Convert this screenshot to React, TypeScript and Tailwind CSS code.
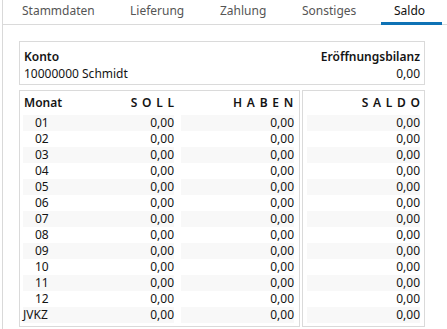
const tabs = [
  { label: 'Stammdaten', w: 'w-[108px]' },
  { label: 'Lieferung', w: 'w-[90px]' },
  { label: 'Zahlung', w: 'w-[82px]' },
  { label: 'Sonstiges', w: 'w-[79px]' },
];
const months = ['01', '02', '03', '04', '05', '06', '07', '08', '09', '10', '11', '12'];

type Row = { label: string; indent: boolean };
const rows: Row[] = [
  ...months.map((m) => ({ label: m, indent: true })),
  { label: 'JVKZ', indent: false },
];

export default function App() {
  return (
    <div
      className="w-[447px] h-[329px] bg-white text-[12px] text-[#141414] overflow-hidden"
      style={{ fontFamily: '"Noto Sans", "Open Sans", sans-serif' }}
    >
      <div className="ml-[2px] h-full border-l border-[#d9d9d9]">
        {/* tab strip */}
        <div className="flex h-[25px] items-stretch border-b border-[#dadada] pl-[19px] text-[12px] leading-[22px]">
          {tabs.map((t) => (
            <div key={t.label} className={`${t.w} text-[#555555] whitespace-nowrap`}>
              {t.label}
            </div>
          ))}
          <div className="-mb-px w-[61px] border-b-[3px] border-[#0e72b5] pl-[13px] text-[#111111]">
            Saldo
          </div>
        </div>

        <div className="pl-[16px] pt-[16px]">
          {/* Konto */}
          <div className="w-[406px] h-[44px] border border-[#dadada] px-[4px] pt-[6px] leading-[17px]">
            <div className="flex justify-between font-semibold">
              <span>Konto</span>
              <span>Eröffnungsbilanz</span>
            </div>
            <div className="flex justify-between">
              <span>10000000 Schmidt</span>
              <span>0,00</span>
            </div>
          </div>

          {/* tables */}
          <div className="mt-[5px] flex gap-[2px]">
            <div className="w-[281px] h-[237px] border border-[#dadada] pl-[3px] pr-[5px] pt-[3px]">
              <div className="flex h-[17px] leading-[17px] font-semibold mb-[4px]">
                <div className="w-[151px] flex justify-between pl-px">
                  <span>Monat</span>
                  <span className="tracking-[0.8px] -mr-[0.8px]">S O L L</span>
                </div>
                <div className="ml-[7px] w-[113px] text-right tracking-[0.8px] -mr-[0.8px]">H A B E N</div>
              </div>
              {rows.map((r, i) => {
                const bg = i % 2 === 0 ? 'bg-[#f8f8f8]' : 'bg-white';
                return (
                  <div key={r.label} className="flex h-[16px] leading-[16px]">
                    <div className={`w-[151px] flex justify-between ${bg}`}>
                      <span className={r.indent ? 'pl-[12px]' : ''}>{r.label}</span>
                      <span>0,00</span>
                    </div>
                    <div className={`ml-[7px] w-[113px] text-right ${bg}`}>0,00</div>
                  </div>
                );
              })}
            </div>

            <div className="w-[123px] h-[237px] border border-[#dadada] px-[4px] pt-[3px]">
              <div className="h-[17px] leading-[17px] font-semibold text-right mb-[4px] tracking-[0.8px] -mr-[0.8px]">
                S A L D O
              </div>
              {rows.map((r, i) => (
                <div
                  key={r.label}
                  className={`h-[16px] leading-[16px] text-right ${i % 2 === 0 ? 'bg-[#f8f8f8]' : 'bg-white'}`}
                >
                  0,00
                </div>
              ))}
            </div>
          </div>
        </div>
      </div>
    </div>
  );
}
